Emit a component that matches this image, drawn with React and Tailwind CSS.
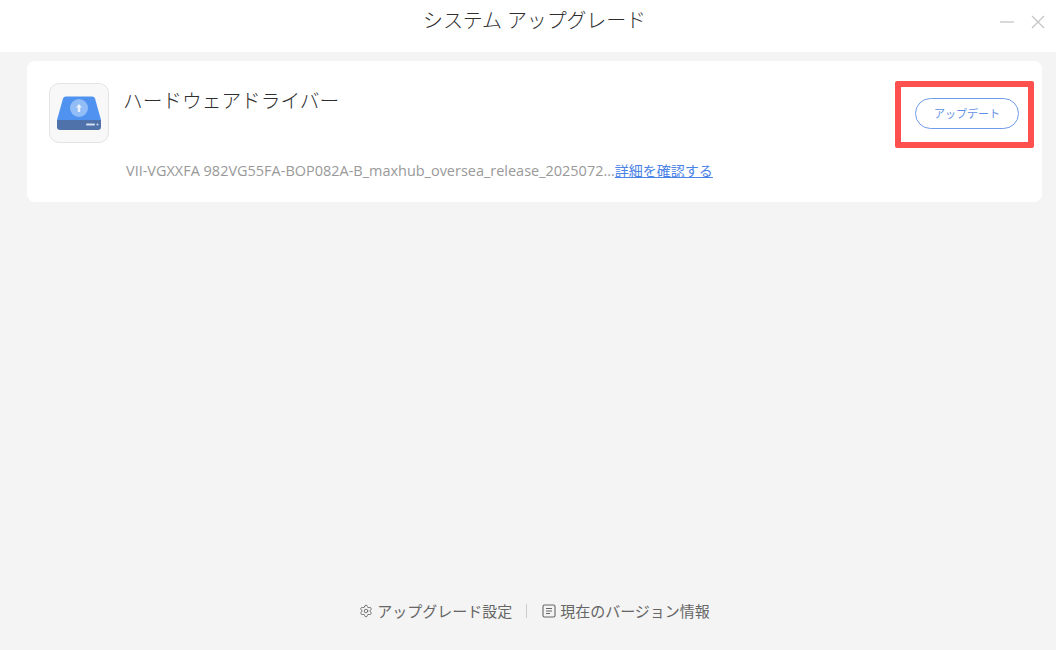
import { Settings } from "lucide-react";

export default function App() {
  const font = { fontFamily: '"Open Sans","Noto Sans CJK JP",sans-serif' };
  return (
    <div style={font} className="w-[1056px] h-[650px] bg-[#f4f4f4] flex flex-col overflow-hidden">
      <header className="h-[52px] bg-white shrink-0 flex items-center justify-center relative pl-[13px]">
        <h1 className="text-[20px] leading-[28px] text-[#2e2e2e] font-light tracking-[-0.15px] -mt-[11px]">システム アップグレード</h1>
        <div className="absolute right-[11px] top-[15px] flex items-center gap-[16px]">
          <svg width="16" height="14" viewBox="0 0 16 14"><path d="M1 7H15" stroke="#c4c4c4" strokeWidth="1.3" /></svg>
          <svg width="14" height="14" viewBox="0 0 14 14"><path d="M1 1L13 13M13 1L1 13" stroke="#c4c4c4" strokeWidth="1.2" /></svg>
        </div>
      </header>
      <main className="flex-1 flex flex-col pl-[27px] pr-[14px] pt-[9px] pb-[29px]">
        <section className="h-[141px] bg-white rounded-lg relative flex flex-col pl-[22px] pr-[23px] pt-[22px]">
          <div className="flex items-start">
            <div className="w-[60px] h-[60px] rounded-[10px] border border-[#e4e4e4] bg-[#f8f8f8] flex items-center justify-center shrink-0">
              <svg width="46" height="38" viewBox="0 0 46 38">
                <path d="M10 2.5H36C37.5 2.5 38.5 3.3 39 4.5L45 26H1L7 4.5C7.5 3.3 8.5 2.5 10 2.5Z" fill="#4f92f0" />
                <path d="M1 26H45V33C45 35 43.8 36 42 36H4C2.2 36 1 35 1 33Z" fill="#4f72ab" />
                <circle cx="23" cy="14" r="9" fill="#93bdf6" />
                <path d="M23 10L26 13.5H24.2V18H21.8V13.5H20Z" fill="#e8f1fd" />
                <rect x="30" y="29.5" width="9" height="2" rx="1" fill="#d5deee" />
                <circle cx="41.5" cy="30.5" r="1" fill="#d5deee" />
              </svg>
            </div>
            <div className="ml-[14px] text-[19.7px] leading-[28px] text-[#2e2e2e] font-light mt-[4px]">ハードウェアドライバー</div>
            <button className="ml-auto mt-[15px] w-[104px] h-[31px] rounded-full border border-[#6f9be8] bg-white text-[11px] text-[#5f8fe6] flex items-center justify-center pt-[2px]">アップデート</button>
          </div>
          <div className="ml-[77px] mt-[18px] text-[14.47px] leading-[20px] text-[#999999] whitespace-nowrap">
            VII-VGXXFA 982VG55FA-BOP082A-B_maxhub_oversea_release_2025072...<a className="text-[14px] text-[#4a82e6] underline">詳細を確認する</a>
          </div>
          <div className="absolute left-[868px] top-[20px] w-[139px] h-[67px] border-[6px] border-[#ff5050] rounded-[2px] pointer-events-none" />
        </section>
        <footer className="mt-auto flex items-center justify-center text-[15px] leading-[20px] text-[#666666]">
          <Settings className="mr-[4px]" size={14} strokeWidth={1.5} color="#666666" />
          <span>アップグレード設定</span>
          <span className="w-px h-[14px] bg-[#cccccc] ml-[14px] mr-[15px]" />
          <svg className="mr-[4px]" width="14" height="14" viewBox="0 0 14 14" fill="none" stroke="#666666" strokeWidth="1.1">
            <rect x="1" y="1" width="12" height="12" rx="1.5" />
            <path d="M4 4.5H10M4 7H10M4 9.5H8" />
          </svg>
          <span>現在のバージョン情報</span>
        </footer>
      </main>
    </div>
  );
}
